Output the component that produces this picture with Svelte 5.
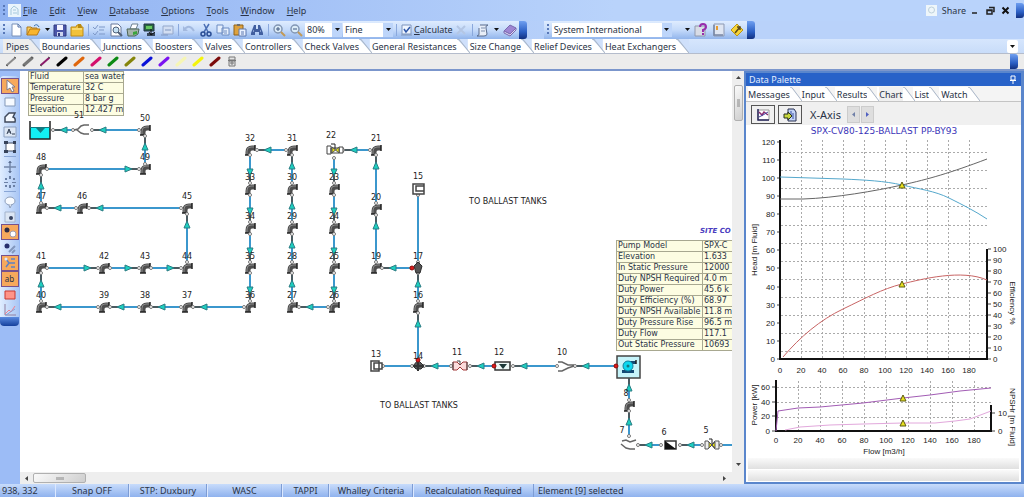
<script>
  const menus = ['File', 'Edit', 'View', 'Database', 'Options', 'Tools', 'Window', 'Help'];
  const libraryTabs = ['Pipes', 'Boundaries', 'Junctions', 'Boosters', 'Valves', 'Controllers', 'Check Valves',
    'General Resistances', 'Size Change', 'Relief Devices', 'Heat Exchangers'];
  const pipeColours = ['#8b8b8b', '#777777', '#8a1a6a', '#000000', '#e0660c', '#d4106c', '#0c8a14', '#85850a',
    '#0a12d8', '#7a12f0', '#f6f6b4', '#f4f40c', '#7c0c0c'];
  const thinPipes = [0, 2];
  const paletteTabs = ['Messages', 'Input', 'Results', 'Chart', 'List', 'Watch'];
  const status = ['938, 332', 'Snap OFF', 'STP: Duxbury', 'WASC', 'TAPPI', 'Whalley Criteria', 'Recalculation Required', 'Element [9] selected'];

  const fluid = [['Fluid', 'sea water'], ['Temperature', '32 C'], ['Pressure', '8 bar g'], ['Elevation', '12.427 m']];
  const pump = [['Pump Model', 'SPX-C'], ['Elevation', '1.633'], ['In Static Pressure', '12000'], ['Duty NPSH Required', '4.0 m'],
    ['Duty Power', '45.6 k'], ['Duty Efficiency (%)', '68.97'], ['Duty NPSH Available', '11.8 m'], ['Duty Pressure Rise', '96.5 m'],
    ['Duty Flow', '117.1'], ['Out Static Pressure', '10693']];

  const elbows = [
    [50, 145, 130], [49, 145, 169], [48, 41, 169], [47, 41, 208], [46, 82, 208], [45, 187, 208], [44, 187, 268],
    [43, 145, 268], [42, 104, 268], [41, 41, 268], [40, 41, 307], [39, 104, 307], [38, 145, 307], [37, 187, 307],
    [36, 250, 307], [35, 250, 268], [34, 250, 228], [33, 250, 189], [32, 250, 150], [31, 292, 150], [30, 292, 189],
    [29, 292, 228], [28, 292, 268], [27, 292, 307], [26, 334, 307], [25, 334, 268], [24, 334, 228], [23, 334, 189],
    [21, 376, 150], [20, 376, 209], [19, 376, 268], [16, 418, 307]
  ];
  const labels = [
    ...elbows, [51, 79, 127], [22, 331, 147], [17, 418, 268], [15, 418, 188], [14, 418, 368], [13, 376, 366],
    [11, 457, 364], [12, 499, 364], [10, 562, 364], [8, 626, 405], [7, 622, 442], [6, 664, 444], [5, 706, 442]
  ];
  // start x, start y, end x, end y (flow direction), arrow drawn
  const pipes = [
    [139, 130, 92, 130, 1], [73, 130, 53, 130, 1], [145, 164, 145, 136, 1], [47, 169, 139, 169, 1], [41, 203, 41, 175, 1],
    [76, 208, 47, 208, 1], [181, 208, 89, 208, 1], [187, 262, 187, 214, 1], [47, 268, 98, 268, 1], [110, 268, 139, 268, 1],
    [151, 268, 181, 268, 1], [41, 301, 41, 273, 1], [98, 307, 47, 307, 1], [139, 307, 110, 307, 1], [181, 307, 151, 307, 1],
    [244, 307, 193, 307, 1], [286, 150, 257, 150, 1], [250, 155, 250, 183, 1], [250, 195, 250, 222, 1], [250, 234, 250, 262, 1],
    [250, 273, 250, 301, 1], [292, 183, 292, 155, 1], [292, 222, 292, 195, 1], [292, 262, 292, 234, 1], [292, 301, 292, 273, 1],
    [328, 307, 299, 307, 1], [334, 158, 334, 183, 1], [334, 195, 334, 222, 1], [334, 234, 334, 262, 1], [334, 273, 334, 301, 1],
    [370, 150, 343, 150, 1], [376, 203, 376, 155, 1], [376, 262, 376, 215, 1], [411, 268, 382, 268, 1], [418, 195, 418, 262, 0],
    [418, 301, 418, 273, 1], [418, 360, 418, 313, 1], [383, 366, 412, 366, 0], [451, 366, 424, 366, 1], [494, 366, 470, 366, 1],
    [557, 366, 513, 366, 1], [616, 366, 575, 366, 1], [629, 400, 629, 377, 1], [629, 436, 629, 411, 1], [661, 445, 638, 445, 1],
    [702, 445, 680, 445, 1], [740, 445, 721, 445, 0]
  ];
  const redPorts = [[418, 360], [412, 268], [494, 366], [616, 366]];
  const angle = ([x1, y1, x2, y2]) => Math.round(Math.atan2(y2 - y1, x2 - x1) * 180 / Math.PI);

  const steps = [0, 1, 2, 3, 4, 5, 6, 7, 8, 9];
  const headTicks = [0, 10, 20, 30, 40, 50, 60, 70, 80, 90, 100, 110, 120];
  const effTicks = [0, 10, 20, 30, 40, 50, 60, 70, 80, 90, 100];
  const grid = [152, 170, 188, 206, 225, 243, 261, 279, 297, 315, 333, 351];

  const mainTools = ['new', 'open', 'caret', 'save', 'folder', 'sep', 'checks', 'preview', 'print', 'screen', 'card', 'sep',
    'undo', 'cut', 'copy', 'paste', 'find', 'sep', 'zoomin', 'zoomout'];
  const sideTools = ['cursor*', 'rect', 'poly', 'text', 'frame', 'sep', 'cross', 'snap', 'sep', 'balloon', 'dot', 'nodes*', 'links', 'tree*', 'ab*', 'red', 'graph'];
</script>

{#snippet icon(name)}
  <svg class="icon" width="16" height="14" viewBox="0 0 16 14" aria-hidden="true">
    {#if name === 'new'}
      <path d="M4 1h6l3 3v9H4z" fill="#fff" stroke="#7890b8" /><path d="M10 1v3h3" fill="none" stroke="#5070a8" />
    {:else if name === 'open'}
      <path d="M2 12V4h4l1 1h5v3" fill="#f8cc5c" stroke="#b07818" /><path d="M2 12l3-6h10l-3 6z" fill="#f9b52e" stroke="#b87a16" /><path d="M9 3q3-3 5 1" fill="none" stroke="#3870b0" />
    {:else if name === 'save'}
      <path d="M2 2h12v11H2z" fill="#4a55a8" stroke="#303a80" /><path d="M5 2h6v5H5z" fill="#f4f4ff" /><path d="M5 9h6v4H5z" fill="#ccd4ee" /><path d="M6 10h2v3H6z" fill="#303a80" />
    {:else if name === 'folder'}
      <path d="M2 4h5l1-2h4v2h2v9H2z" fill="#f1c23c" stroke="#c08c14" /><path d="M9 1h3l1 4h-4z" fill="#b98a10" /><path d="M3 6h10" stroke="#fff0a8" />
    {:else if name === 'checks'}
      <g fill="none" stroke="#7f99c8"><path d="M2 4l2 2 3-4M2 10l2 2 3-4M8 4h6M8 7h5M8 11h6" /></g>
    {:else if name === 'preview'}
      <path d="M3 1h7l3 3v9H3z" fill="#fff" stroke="#68789a" /><circle cx="8" cy="7" r="3" fill="#c6e2f4" stroke="#506078" /><path d="M10 9l4 4" stroke="#506078" stroke-width="2" />
    {:else if name === 'print'}
      <path d="M5 6l2-5h6l-2 5z" fill="#fff" stroke="#6c8090" /><path d="M2 6h12l-1 5-3 2H3z" fill="#a6b4ac" stroke="#4c6454" /><path d="M8 9l4-1v3l-4 1z" fill="#3aa43c" />
    {:else if name === 'screen'}
      <path d="M2 1h10v7H2z" fill="#2c6840" stroke="#20304c" /><path d="M4 3h6v3H4z" fill="#66c860" /><path d="M5 10h8v3H5z" fill="#38485c" /><path d="M9 6v6M7 9l2 3 4-3" fill="none" stroke="#111" />
    {:else if name === 'card'}
      <path d="M4 3h10v8H4z" fill="#d2def2" stroke="#94a8cc" /><path d="M2 12h7M6 7h6" stroke="#8097c0" />
    {:else if name === 'undo'}
      <path d="M3 7q5-7 10 1" fill="none" stroke="#a3b9df" stroke-width="2" /><path d="M2 3v5h5z" fill="#a3b9df" />
    {:else if name === 'cut'}
      <path d="M6 1l4 8M11 1L6 9" stroke="#4b6fb4" stroke-width="1.5" /><circle cx="5" cy="11" r="2" fill="none" stroke="#284c94" stroke-width="1.5" /><circle cx="11" cy="11" r="2" fill="none" stroke="#284c94" stroke-width="1.5" />
    {:else if name === 'copy'}
      <path d="M2 2h6v8H2zM7 5h7v7H7z" fill="#e6effc" stroke="#6d8cc2" /><path d="M9 8h3M9 10h3" stroke="#6d8cc2" />
    {:else if name === 'paste'}
      <path d="M2 2h9v10H2z" fill="#dda23e" stroke="#916318" /><path d="M5 1h3v2H5z" fill="#6e6e6e" /><path d="M7 6h7v7H7z" fill="#e8f0ff" stroke="#5c78b0" /><path d="M9 9h3M9 11h3" stroke="#5c78b0" />
    {:else if name === 'find'}
      <path d="M5 2h2v4h2V2h2l3 8v2h-4V9H6v3H2v-2z" fill="#415fa0" /><path d="M4 8h1M11 8h1" stroke="#c8dcff" />
    {:else if name === 'zoomin' || name === 'zoomout'}
      <circle cx="7" cy="6" r="4" fill="#dcecf8" stroke="#8296b4" stroke-width="1.5" /><path d="M10 9l4 4" stroke="#c39a56" stroke-width="2" /><path d={name === 'zoomin' ? 'M5 6h4M7 4v4' : 'M5 6h4'} stroke="#405880" />
    {:else if name === 'x'}
      <path d="M4 3l8 8M12 3l-8 8" stroke="#b4c6e4" stroke-width="2" />
    {:else if name === 'scroll'}
      <path d="M5 2h8q-3 1-2 3l1 6q0 2-3 2H2q3-1 2-3V5" fill="#e8eef8" stroke="#596b8c" /><path d="M6 5h4M6 8h4" stroke="#7f8fae" />
    {:else if name === 'book'}
      <path d="M2 8l6-6 6 3-6 6z" fill="#9e86d2" stroke="#7a6ab0" /><path d="M2 8v2l6 3 6-6V5l-6 6z" fill="#e0dcf4" stroke="#7a6ab0" />
    {:else if name === 'help'}
      <path d="M2 3h10v10H2z" fill="#d8dce6" stroke="#9098ac" /><path d="M7 4q0-3 3-3 3 0 3 3 0 2-3 3v2M10 10v2" fill="none" stroke="#982cac" stroke-width="2" />
    {:else if name === 'page'}
      <path d="M3 1h10v12H3z" fill="#dfe6f2" stroke="#8d99b2" /><path d="M3 2v10h9" fill="none" stroke="#7886a4" stroke-width="1.5" /><path d="M6 3v4" stroke="#e69c30" stroke-width="2" />
    {:else if name === 'tip'}
      <path d="M8 1l6 6-6 6-6-6z" fill="#f7d437" stroke="#ba961a" /><path d="M6 10l5-6M8 4h3v3" fill="none" stroke="#59491a" stroke-width="1.5" />
    {:else if name === 'cursor'}
      <path d="M5 1v10l3-2 2 4 2-1-2-4h3z" fill="#fff" stroke="#7c7c90" />
    {:else if name === 'rect'}
      <path d="M3 3h10v8H3z" fill="#f6faff" stroke="#8499b8" />
    {:else if name === 'poly'}
      <path d="M3 12V7l4-4h6l-2 4q3 1 2 5z" fill="#f6faff" stroke="#404a5c" stroke-width="1.5" />
    {:else if name === 'text'}
      <path d="M2 2h12v10H2z" fill="#dde7f5" stroke="#8ba0c0" /><path d="M5 9l2-5 2 5M6 7h3" fill="none" stroke="#303c50" /><path d="M10 9h3" stroke="#303c50" />
    {:else if name === 'frame'}
      <path d="M4 3h9v8H4z" fill="#fff" stroke="#404c64" /><path d="M2 1h4v3H2zM11 1h3v3h-3zM2 10h4v3H2zM11 10h3v3h-3z" fill="#37435a" />
    {:else if name === 'cross'}
      <path d="M8 1v12M2 7h12" stroke="#7488aa" stroke-width="1.5" /><path d="M6 3h4L8 1zM6 11h4l-2 2z" fill="#5b6f92" />
    {:else if name === 'snap'}
      <path d="M3 3h2v2H3zM7 1h2v3H7zM11 3h2v2h-2zM2 7h4v1H2zM10 7h4v1h-4zM7 10h2v3H7zM3 10h2v2H3zM11 10h2v2h-2z" fill="#6c81a6" />
    {:else if name === 'balloon'}
      <ellipse cx="8" cy="6" rx="5" ry="4" fill="#f8fbff" stroke="#8e9fbb" /><path d="M7 10l1 3 2-4" fill="#f8fbff" stroke="#8e9fbb" />
    {:else if name === 'dot'}
      <path d="M3 2h10v10H3z" fill="#dce6f4" stroke="#a4b4cc" /><circle cx="9" cy="8" r="2" fill="#384460" />
    {:else if name === 'nodes'}
      <circle cx="5" cy="5" r="2.5" fill="#302c44" /><circle cx="11" cy="9" r="3" fill="#fff" stroke="#a0a0b0" />
    {:else if name === 'links'}
      <circle cx="5" cy="5" r="2.5" fill="#28306c" /><path d="M7 11l6-6M10 12l3-3" stroke="#8297bd" stroke-width="2" />
    {:else if name === 'tree'}
      <path d="M4 3l3 4-3 4M7 7h6M9 3h4M9 11h4" fill="none" stroke="#5d82c4" stroke-width="1.5" /><circle cx="4" cy="3" r="1.5" fill="#dce8ff" />
    {:else if name === 'red'}
      <path d="M3 3h10v8H3z" fill="#ff9488" stroke="#c83830" />
    {:else if name === 'graph'}
      <path d="M3 1v11h11" fill="none" stroke="#9080a0" /><path d="M3 11l4-4 2 2 4-6" fill="none" stroke="#f08090" /><path d="M4 12l9-6" stroke="#88a0d0" />
    {:else if name === 'chart'}
      <path d="M3 2h11v10H3z" fill="#fff" stroke="#999" /><path d="M3 1v11h11" fill="none" stroke="#29295c" stroke-width="1.5" /><path d="M4 4l3 3 2-3 4 3" fill="none" stroke="#8b2e70" stroke-width="1.5" /><path d="M4 9l4-2 5-3" fill="none" stroke="#4444a0" />
    {:else if name === 'export'}
      <path d="M6 1h6l2 3v9H6z" fill="#c4d4f8" stroke="#283050" /><path d="M9 3v5M11 5v6" stroke="#3850a0" /><path d="M2 6h4V4l4 4-4 4v-2H2z" fill="#c8d83c" stroke="#283020" />
    {/if}
  </svg>
{/snippet}

{#snippet caret()}
  <svg width="7" height="14" viewBox="0 0 7 14" aria-hidden="true"><path d="M1 5h5L3.5 8z" fill="#111" /></svg>
{/snippet}

{#snippet slant(fill, last)}
  <svg width={fill === '#f4f4f4' ? 12 : 13} height="14" viewBox="0 0 12 14" preserveAspectRatio="none" aria-hidden="true">
    <path d="M0 0h12v14z" {fill} />
    {#if !last}<path d="M10 0h2v14l-2-2z" fill="#fff" />{/if}
    <path d="M0 0q2 0 3 2l9 12" fill="none" stroke="#a9b6c8" />
  </svg>
{/snippet}

{#snippet elbow(x, y)}
  <g transform="translate({x - 5} {y - 5})">
    <path d="M3 10V7Q3 3 7 3h3" fill="none" stroke="#4e4e4e" stroke-width="5" />
    <path d="M0 10h6M10 0v6" stroke="#262626" stroke-width="1.5" /><path d="M2 9V6q0-4 4-4h3" fill="none" stroke="#8a8a8a" />
  </g>
{/snippet}

{#snippet mark(x, y)}
  <path d="M{x} {y - 3}l3 6h-6z" fill="#e8e020" stroke="#5a5a10" />
{/snippet}

<div class="app">
  <header>
    <nav class="menubar">
      <span class="grip"></span>
      <svg class="logo" width="13" height="13" viewBox="0 0 13 13" aria-hidden="true"><path d="M0 0h13v13H0z" fill="#eaf4fc" /><path d="M3 11V5l3-3 4 3v6M5 6h3M5 9h4" fill="none" stroke="#a6c8dc" /></svg>
      {#each menus as m}<button class="menu"><u>{m[0]}</u>{m.slice(1)}</button>{/each}
      <span class="spacer"></span>
      <button class="share">
        <svg width="11" height="11" viewBox="0 0 11 11" aria-hidden="true"><path d="M0 0h11v11H0z" fill="#eef6fa" /><circle cx="5.5" cy="5" r="3" fill="none" stroke="#bdd0da" /></svg>
        Share
      </button>
      <button class="win" aria-label="Minimize"><svg width="9" height="9"><path d="M1 7h5" stroke="#222" stroke-width="1.5" /></svg></button>
      <button class="win" aria-label="Restore"><svg width="9" height="9"><path d="M3 1.5h5v4H7M1 4h5v4H1zM1 4.5h5" fill="none" stroke="#222" stroke-width="1.5" /></svg></button>
      <button class="win" aria-label="Close"><svg width="9" height="9"><path d="M1.5 1.5l6 6M7.5 1.5l-6 6" stroke="#111" stroke-width="2" /></svg></button>
      <span class="cap"></span>
    </nav>

    <div class="toolbars">
      <div class="bar">
        <span class="grip"></span>
        {#each mainTools as t}
          {#if t === 'sep'}<span class="vsep"></span>
          {:else if t === 'caret'}<button class="drop" aria-label="More">{@render caret()}</button>
          {:else}<button class="tool" aria-label={t}>{@render icon(t)}</button>{/if}
        {/each}
        <label class="pick zoom"><select aria-label="Zoom"><option>80%</option></select><span>{@render caret()}</span></label>
        <label class="pick fine"><select aria-label="Grid"><option>Fine</option></select><span>{@render caret()}</span></label>
        <span class="vsep"></span>
        <button class="calc">
          <svg width="14" height="14" viewBox="0 0 14 14" aria-hidden="true"><path d="M3 2h9v9H3z" fill="#eef5ff" stroke="#7c94bc" /><path d="M2 12h11" stroke="#8095b8" /><path d="M5 6l2 3 4-5" fill="none" stroke="#2c56a8" stroke-width="1.5" /></svg>
          <span><u>C</u>alculate</span>
        </button>
        <button class="tool" aria-label="Stop">{@render icon('x')}</button>
        <span class="vsep"></span>
        <button class="tool" aria-label="Report">{@render icon('scroll')}</button>
        <button class="drop" aria-label="More reports">{@render caret()}</button>
        <button class="tool" aria-label="Manual">{@render icon('book')}</button>
        <span class="cap"></span>
      </div>
      <div class="bar second">
        <span class="grip"></span>
        <label class="pick units"><select aria-label="Units"><option>System International</option></select><span>{@render caret()}</span></label>
        <span class="gap"></span>
        <button class="drop" aria-label="More units">{@render caret()}</button>
        <button class="tool" aria-label="Help">{@render icon('help')}</button>
        <button class="tool" aria-label="Notes">{@render icon('page')}</button>
        <button class="tool" aria-label="Tips">{@render icon('tip')}</button>
        <span class="cap"></span>
      </div>
    </div>

    <div class="tabs library">
      {#each libraryTabs as t, i}<button class:on={i === 0}>{t}</button>{@render slant('#cfe0fb', i === libraryTabs.length - 1)}{/each}
      <span class="spacer"></span>
      <button class="more" aria-label="More tabs">{@render caret()}</button>
    </div>
    <div class="pens">
      {#each pipeColours as c, i}
        <button aria-label="Pipe {i + 1}">
          <svg width="12" height="13" viewBox="0 0 12 13">
            <path d="M2 10L10 3" stroke={c} stroke-width={thinPipes.includes(i) ? 2 : 3} stroke-linecap="round" />
            {#if i < 3}<path d="M1 10l2 1M9 2l2 1" stroke="#555" />{/if}
          </svg>
        </button>
      {/each}
      <button aria-label="Barrel"><svg width="12" height="13" viewBox="0 0 12 13"><path d="M3 2h6v3H3zM3 6h6v5H3zM2 5.5h8M5 7h2v2H5z" fill="#e4e4e4" stroke="#777" /></svg></button>
      <span class="spacer"></span>
      <span class="cap"></span>
    </div>
  </header>

  <main>
    <aside>
      <div class="side">
        {#each sideTools as t}
          {@const name = t.replace('*', '')}
          {#if t === 'sep'}<span class="hsep"></span>
          {:else}
            <button class:on={t.endsWith('*')} aria-label={name}>{#if name === 'ab'}ab{:else}{@render icon(name)}{/if}</button>
          {/if}
        {/each}
        <span class="foot"></span>
      </div>
    </aside>

    <section class="work">
      <div class="canvas">
        <svg class="plan" width="720" height="401" viewBox="20 71 720 401">
          {#each pipes as p}
            <line x1={p[0]} y1={p[1]} x2={p[2]} y2={p[3]} stroke="#3b97cd" stroke-width="2" />
            {#if p[4]}
              <g transform="translate({p[2]} {p[3]}) rotate({angle(p)})">
                <path d="M-8 0H0" stroke="#4a5a60" stroke-width="2" />
                <path d="M-14 -3L-7 0L-14 3z" fill="#1cd0c0" stroke="#2c7c84" />
              </g>
            {/if}
          {/each}
          {#each elbows as [, x, y]}{@render elbow(x, y)}{/each}
          {@render elbow(629, 406)}
          {#each pipes as p}
            <g fill="#fff" stroke="#777"><circle cx={p[0]} cy={p[1]} r="1.5" /><circle cx={p[2]} cy={p[3]} r="1.5" /></g>
          {/each}

          <path d="M30 127h20v12H30z" fill="#12f0f4" /><path d="M30 121v18h20v-18" fill="none" stroke="#222" stroke-width="1.5" /><path d="M30 127.5h20" stroke="#147880" /><path d="M36 128h9l-4.5 5z" fill="#147880" />
          <path d="M74 130l4-1 3-3 3-1h5M77 130l4 3 3 1h5" fill="none" stroke="#666" stroke-width="1.5" />
          <g fill="#fff" stroke="#444"><path d="M327 146h4v8h-4zM339 147h4v6h-4zM331 148h8v5h-8z" /></g>
          <path d="M332 147l7 6v-6l-7 6z" fill="#e8e010" stroke="#555" /><path d="M335 149v-5h-4" fill="none" stroke="#222" />
          <g fill="#fff" stroke="#444" stroke-width="1.5"><path d="M413 184h11v10h-11zM416 186h8v5h-8z" /><path d="M371 361h8v10h-8zM374 363h8v6h-8z" /></g>
          <path d="M418 262l-4 4 2 7h4l2-7zM418 360l-5 6 3 3h5l3-3z" fill="#555" stroke="#2c2c2c" />
          <path d="M413 366h11M418 362v9" stroke="#333" stroke-width="2" />
          <path d="M453 362v8h4l3-3 3 3h4v-8h-4l-3 3-3-3z" fill="#fbdcdc" stroke="#a23838" /><path d="M460 365v-4h-3" fill="none" stroke="#444" /><path d="M453 362v8M467 362v8" stroke="#444" />
          <path d="M495 362h15v8h-15z" fill="#edf8f6" stroke="#333" stroke-width="1.5" /><path d="M499 364h8l-4 5z" fill="#1c3838" />
          <path d="M558 362h4l6 3h6M558 371h4l6-3 6-2" fill="none" stroke="#666" stroke-width="1.5" />
          <path d="M617 356h23v22h-23z" fill="#c6f4fa" stroke="#444" stroke-width="1.5" /><path d="M628 361h8v3h-5M622 370h12v3h-12z" fill="#144a74" /><circle cx="628" cy="366" r="5" fill="#0cd8f0" stroke="#12809c" /><circle cx="628" cy="366" r="1.5" fill="#147880" /><path d="M636 360v4" stroke="#222" stroke-width="1.5" />
          <path d="M622 441l4-1 4 2 6-2M621 444l5 4 4 1h5" fill="none" stroke="#666" stroke-width="1.5" />
          <path d="M665 441h11v8h-11z" fill="#fff" stroke="#333" stroke-width="1.5" /><path d="M665 441l11 8h-11z" fill="#111" />
          <path d="M705 441v8h3l7-8h4v8h-4l-7-8z" fill="#eee" stroke="#555" /><path d="M709 442l6 6v-6l-6 6z" fill="#e8e010" stroke="#555" /><path d="M712 444v-5h-3" fill="none" stroke="#222" />
          {#each redPorts as [x, y]}<circle cx={x} cy={y} r="2" fill="#e01818" stroke="#901010" />{/each}

          <g class="tags">{#each labels as [n, x, y]}<text {x} y={y - 9}>{n}</text>{/each}</g>
          <text class="note" x="469" y="204">TO BALLAST TANKS</text>
          <text class="note" x="380" y="408">TO BALLAST TANKS</text>
          <text class="site" x="700" y="233">SITE CO</text>
        </svg>
        <table class="facts fluid"><tbody>{#each fluid as [k, v]}<tr><th scope="row">{k}</th><td>{v}</td></tr>{/each}</tbody></table>
        <table class="facts pump"><tbody>{#each pump as [k, v]}<tr><th scope="row">{k}</th><td>{v}</td></tr>{/each}</tbody></table>
      </div>
      <div class="vscroll">
        <svg width="9" height="6"><path d="M2 4h5L4.5 1z" fill="#444" /></svg>
        <span class="thumb"><svg width="7" height="8"><path d="M2 1h3M2 3h3M2 5h3M2 7h3" stroke="#888" /></svg></span><span class="spacer"></span>
        <svg width="9" height="6"><path d="M2 1h5L4.5 4z" fill="#444" /></svg>
      </div>
      <div class="hscroll">
        <svg width="6" height="9"><path d="M4 2v5L1 4.5z" fill="#444" /></svg>
        <span class="thumb"><svg width="8" height="7"><path d="M1 2v3M3 2v3M5 2v3M7 2v3" stroke="#888" /></svg></span><span class="spacer"></span>
        <svg width="6" height="9"><path d="M1 2v5l3-2.5z" fill="#444" /></svg>
      </div>
    </section>

    <section class="palette">
      <h2>Data Palette <svg width="8" height="9" viewBox="0 0 8 9" aria-hidden="true"><path d="M2 1h4v4H2zM1 5.5h6M4 6v3" fill="none" stroke="#fff" /></svg></h2>
      <div class="tabs">
        {#each paletteTabs as t, i}<button class:on={t === 'Chart'}>{t}</button>{@render slant('#f4f4f4', i === paletteTabs.length - 1)}{/each}
      </div>
      <div class="axisbar">
        <button class="box" aria-label="Chart">{@render icon('chart')}</button>
        <button class="box" aria-label="Export">{@render icon('export')}</button>
        <span class="axis">X-Axis</span>
        <button class="step" aria-label="Previous"><svg width="5" height="5"><path d="M4 0v5L1 2.5z" fill="#7080a8" /></svg></button>
        <button class="step" aria-label="Next"><svg width="5" height="5"><path d="M1 0v5l3-2.5z" fill="#5060c0" /></svg></button>
      </div>
      <svg class="charts" viewBox="746 125 275 333">
        <text class="title" x="884" y="134">SPX-CV80-125-BALLAST PP-BY93</text>
        <g class="grid">
          {#each grid as y}<path d="M781 {y}H987" />{/each}
          {#each steps.slice(1) as i}<path d="M{780 + i * 21} 140V359" /><path d="M{776 + i * 22} 381V431" />{/each}
          {#each [387, 402, 417] as y}<path d="M777 {y}H991" />{/each}
        </g>
        <g class="end">
          {#each headTicks as v, i}<text x="775" y={362 - Math.round(i * 18.1)}>{v}</text><path class="tick" d="M777 {359 - Math.round(i * 18.1)}h3" />{/each}
          {#each [0, 20, 40, 60] as v, i}<text x="770" y={434 - Math.round(i * 14.7)}>{v}</text><path class="tick" d="M772 {431 - Math.round(i * 14.7)}h3" />{/each}
        </g>
        <g class="mid">
          {#each steps as i}<text x={780 + i * 21} y="373">{i * 20}</text><text x={776 + i * 22} y="443">{i * 20}</text>{/each}
          <text x="884" y="454">Flow [m3/h]</text>
          <text transform="translate(757 250) rotate(-90)">Head [m Fluid]</text>
          <text transform="translate(757 405) rotate(-90)">Power [kW]</text>
          <text transform="translate(1010 303) rotate(90)">Efficiency %</text>
          <text transform="translate(1010 417) rotate(90)">NPSHr [m Fluid]</text>
        </g>
        <g>
          {#each effTicks as v, i}<text x="993" y={362 - i * 11}>{v}</text><path class="tick" d="M988 {359 - i * 11}h3" />{/each}
          <text x="998" y="416">10</text><text x="998" y="434">0</text><path class="tick" d="M992 413h3M992 431h3" />
        </g>
        <g class="axes"><path d="M780 140V359H987V249M776 380V431H991V405" /></g>
        <g fill="none">
          <path d="M780 177L843 179C865 180 885 181 902 185S935 191 949 198S975 211 987 219" stroke="#55a8cc" />
          <path d="M780 199H803C835 198 875 191 902 185S950 173 987 159" stroke="#666" />
          <path d="M783 357C800 337 820 320 843 309S882 289 902 284S962 269 987 280" stroke="#c86464" />
          <path d="M776 431L778 411L798 408L820 407L863 403L903 398L930 395L960 391L991 388" stroke="#a25cb4" />
          <path d="M785 430L800 427L830 425L863 424L903 423H935L955 421L970 419L991 411" stroke="#e2a8dc" />
        </g>
        {@render mark(902, 185)}{@render mark(902, 284)}{@render mark(903, 398)}{@render mark(903, 423)}
      </svg>
      <div class="band"></div>
      <div class="band"></div>
    </section>
  </main>

  <footer>{#each status as s}<span>{s}</span>{/each}</footer>
</div>

<style>
  :global(body) { margin: 0; }
  .app { display: flex; flex-direction: column; min-height: 100vh; background: #a9c5f5; font: 9px/12px 'Noto Sans', Verdana, sans-serif; color: #2a3346; overflow: hidden; }
  button, select { font: inherit; color: inherit; border: 0; margin: 0; padding: 0; background: none; }
  svg { display: block; flex: none; }
  text { font: 8px 'Liberation Sans', Arial, sans-serif; fill: #222; }
  .spacer { flex: 1; }
  .grip { width: 2px; height: 12px; margin: 0 3px; flex: none; background: repeating-linear-gradient(#5878b8 0 2px, transparent 2px 4px); }
  .cap { width: 8px; align-self: stretch; flex: none; background: linear-gradient(#6f9ff0, #2b5fc4 60%, #123080); border-radius: 0 3px 3px 0; }

  .menubar { display: flex; align-items: center; height: 21px; background: linear-gradient(90deg, #90b2f2, #b9d3fb 60%); }
  .logo { margin-right: 2px; }
  .menu { margin-right: 12px; white-space: nowrap; }
  .share { display: flex; gap: 5px; align-items: center; margin-right: 5px; }
  .win { margin-right: 6px; }
  .menubar .cap { height: 15px; align-self: center; }

  .toolbars { display: flex; gap: 17px; height: 18px; background: linear-gradient(90deg, #98b8f4, #b9d2fa 60%); }
  .bar { display: flex; align-items: center; background: linear-gradient(#dfecfe, #c4dafa 50%, #92b5ec); border-radius: 0 4px 4px 0; }
  .tool { width: 17px; flex: none; }
  .second .tool { width: 18px; }
  .drop { width: 10px; display: grid; place-items: center; flex: none; }
  .vsep { width: 1px; height: 12px; margin: 0 2px; background: #8aa8dc; flex: none; }
  .pick { display: flex; height: 14px; background: #fff; margin-right: 1px; }
  .pick select { appearance: none; flex: 1; min-width: 0; padding-left: 2px; outline: 0; }
  .pick span { width: 10px; display: grid; place-items: center; background: #bdd5fa; }
  .zoom { width: 37px; }
  .fine { width: 50px; }
  .units { width: 120px; }
  .gap { width: 10px; }
  .calc { display: flex; align-items: center; gap: 1px; }

  .tabs { display: flex; align-items: flex-end; height: 14px; }
  .tabs button { height: 14px; padding-top: 1px; background: #fff; white-space: nowrap; }
  .tabs > :global(svg) { background: #fff; }
  .library { padding-left: 3px; background: linear-gradient(#d6e6fd, #c8dcf9); border-bottom: 1px solid #b4bccc; }
  .library button:first-child { padding-left: 3px; }
  .library button.on, .library button.on + :global(svg) { background: #eee; }
  .library .more { width: 11px; height: 13px; margin-right: 6px; padding: 0 0 0 2px; background: #fff; border-radius: 2px; }
  .pens { display: flex; align-items: center; height: 15px; padding: 0 6px 0 5px; gap: 5px; background: #ececec; border-bottom: 2px solid #7b96cc; }
  .pens button { width: 12px; }

  main { flex: 1; display: grid; grid-template-columns: 20px minmax(0, 1fr) 280px; }
  aside { background: #9cbcf6; padding-top: 5px; }
  .side { display: flex; flex-direction: column; align-items: center; width: 19px; padding-top: 2px; background: linear-gradient(90deg, #e0edff, #a9c6f4); border-radius: 4px; }
  .side button { width: 18px; height: 15px; display: grid; place-items: center; font-size: 8px; }
  .side button.on { height: 16px; box-sizing: border-box; background: #f7a95c; border: 1px solid #77528c; }
  .hsep { width: 12px; height: 1px; margin: 2px 0; background: #89a6d6; }
  .foot { width: 19px; height: 9px; background: linear-gradient(#5a8ae0, #15409c); border-radius: 0 0 4px 4px; }

  .work { display: grid; grid-template-columns: minmax(0, 1fr) 12px; grid-template-rows: 1fr 12px; background: #eee; }
  .canvas { position: relative; overflow: hidden; background: #fff; }
  .plan { position: relative; z-index: 1; }
  .plan .tags text, .plan .note { font: 8px 'DejaVu Sans', Verdana, sans-serif; }
  .plan .tags text { text-anchor: middle; }
  .plan .site { font: italic bold 7px 'DejaVu Sans', Verdana, sans-serif; fill: #4a3cc0; }
  .facts { position: absolute; border-collapse: collapse; font: 8px/10px 'DejaVu Sans', Verdana, sans-serif; background: #fdfde2; table-layout: fixed; }
  .facts th, .facts td { padding: 0 1px; font-weight: normal; text-align: left; white-space: nowrap; border: 1px solid #a8a890; }
  .fluid { left: 8px; top: 0; width: 96px; }
  .fluid th { width: 52px; }
  .pump { left: 596px; top: 169px; width: 140px; }
  .pump th { width: 83px; }
  .vscroll { display: flex; flex-direction: column; align-items: center; padding: 4px 0; gap: 4px; }
  .vscroll .thumb { width: 9px; height: 36px; }
  .hscroll { display: flex; align-items: center; padding: 0 4px; gap: 3px; }
  .hscroll .thumb { width: 53px; height: 10px; }
  .thumb { display: grid; place-items: center; border: 1px solid #b0b0b0; border-radius: 2px; background: linear-gradient(135deg, #fafafa, #cfcfcf); box-sizing: border-box; }

  .palette { display: flex; flex-direction: column; border: 2px solid #5a86cc; border-width: 2px 3px 2px 2px; background: #fff; min-width: 0; }
  h2 { display: flex; justify-content: space-between; margin: 0; padding: 0 4px 0 3px; font: inherit; line-height: 13px; color: #e4eeff; background: #2862c8; align-items: center; }
  .palette .tabs { height: 15px; padding-left: 2px; background: #f4f4f4; border-bottom: 1px solid #c4c4c4; }
  .palette .tabs button.on { background: #f0f0f0; }
  .axisbar { display: flex; align-items: center; gap: 3px; padding: 3px 5px 1px; background: #f0f0f0; }
  .box { width: 24px; height: 19px; border: 1px solid #555; display: grid; place-items: center; }
  .axis { margin: 0 3px 0 5px; font-size: 11px; }
  .step { width: 13px; height: 17px; margin-right: -2px; background: #dedede; border: 1px solid #ccc; display: grid; place-items: center; }
  .charts { width: 100%; height: auto; }
  .charts .title { font: 9px 'DejaVu Sans', Verdana, sans-serif; fill: #3a34b8; text-anchor: middle; }
  .end text { text-anchor: end; }
  .mid text { text-anchor: middle; }
  .grid path { fill: none; stroke: #aaa; stroke-dasharray: 2 2; shape-rendering: crispEdges; }
  .tick { stroke: #444; }
  .axes path { fill: none; stroke: #111; stroke-width: 2; }
  .band { flex: 1; min-height: 8px; margin: 0 2px 1px; background: linear-gradient(#fafafa, #e0e0e0); }

  footer { display: grid; grid-template-columns: 55px 74px 78px 75px 47px 84px 121px 1fr; height: 13px; line-height: 14px; background: linear-gradient(#c8dcfb, #8fb2ee); }
  footer span { text-align: center; border-right: 1px solid #7d9cd4; border-left: 1px solid #dbe8ff; white-space: nowrap; }
  footer span:first-child, footer span:last-child { text-align: left; padding-left: 2px; border-width: 0; }
  footer span:last-child { padding-left: 4px; }
</style>
